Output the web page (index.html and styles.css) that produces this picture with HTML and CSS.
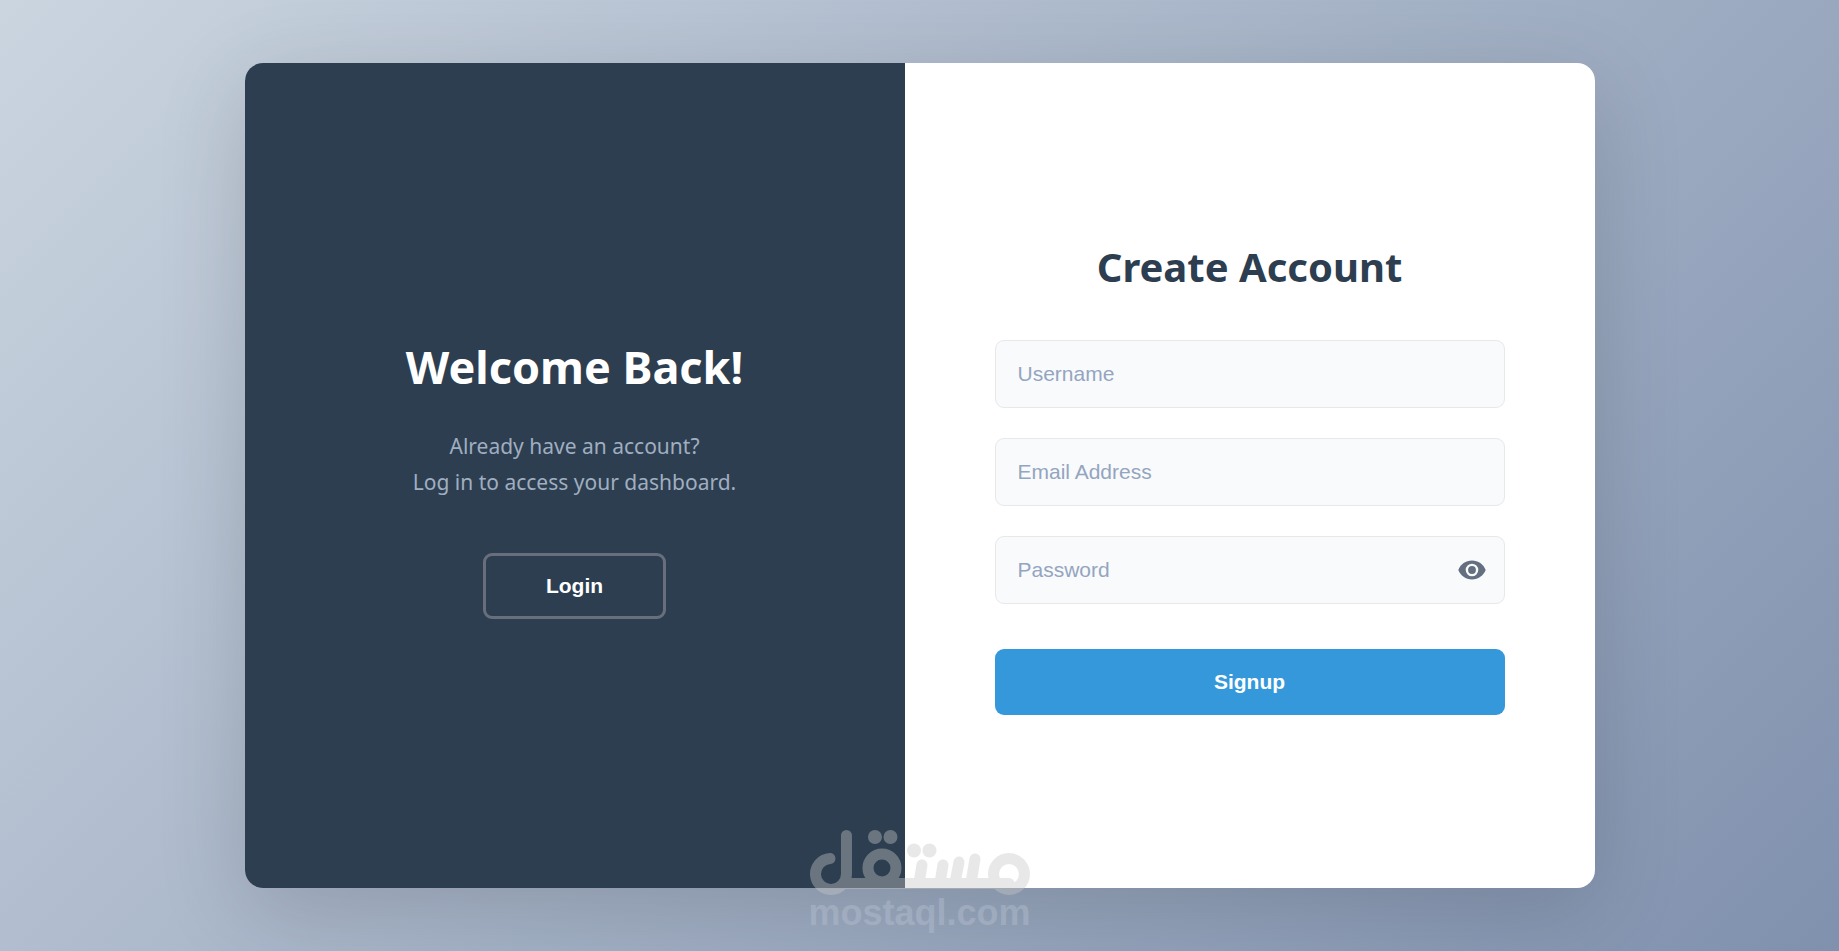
FILE: index.html
```html
<!DOCTYPE html>
<html lang="en">
<head>
<meta charset="utf-8">
<meta name="viewport" content="width=device-width, initial-scale=1">
<title>Create Account</title>
<link rel="stylesheet" href="styles.css">
</head>
<body>
<main class="card">
  <section class="welcome">
    <h1 class="welcome-title">Welcome Back!</h1>
    <p class="welcome-text">Already have an account?<br>Log in to access your dashboard.</p>
    <button class="login-button" type="button">Login</button>
  </section>
  <section class="signup">
    <h2 class="signup-title">Create Account</h2>
    <form class="form">
      <input class="field" type="text" placeholder="Username" aria-label="Username">
      <input class="field" type="email" placeholder="Email Address" aria-label="Email Address">
      <div class="password">
        <input class="field" type="password" placeholder="Password" aria-label="Password">
        <button class="toggle" type="button" aria-label="Show password">
          <svg class="eye" viewBox="0 0 30 30" aria-hidden="true">
            <path fill-rule="evenodd" d="M15 5.600C8.800 5.600 3.500 9.400 1.300 15C3.500 20.600 8.800 24.400 15 24.400S26.500 20.600 28.700 15C26.500 9.400 21.200 5.600 15 5.600ZM15 21.300A6.300 6.300 0 1 1 15 8.700A6.300 6.300 0 0 1 15 21.300Z"/>
            <circle cx="15" cy="15" r="3.900"/>
          </svg>
        </button>
      </div>
      <button class="signup-button" type="submit">Signup</button>
    </form>
  </section>
</main>
<div class="watermark">
  <svg class="watermark-logo" viewBox="0 0 222 66" role="img" aria-label="مستقل">
    <g fill="none" stroke="currentColor" stroke-width="11" stroke-linecap="round" stroke-linejoin="round">
      <path d="M21 29.500A15.500 15.500 0 1 0 37.500 45V6.500M34 54.500H200"/>
      <circle cx="73" cy="39" r="14"/>
      <path d="M113 36L110 54M134 36L131 54M150 33L146 54M166 30L162 54"/>
      <circle cx="200" cy="45" r="15.500"/>
    </g>
    <g fill="currentColor">
      <circle cx="66" cy="8" r="7"/><circle cx="81.500" cy="8" r="7"/>
      <circle cx="105" cy="21.500" r="7"/><circle cx="120.500" cy="21.500" r="7"/>
    </g>
  </svg>
  <span class="watermark-text">mostaql.com</span>
</div>
</body>
</html>
```
FILE: styles.css
```css
* {
  box-sizing: border-box;
}

body {
  margin: 0;
  min-height: 100vh;
  padding: 24px;
  display: flex;
  align-items: center;
  justify-content: center;
  position: relative;
  background: linear-gradient(135deg, #cbd5e0, #8091ae);
  font-family: "Segoe UI", "Noto Sans", sans-serif;
}

.card {
  display: grid;
  grid-template-columns: 22fr 23fr;
  width: 100%;
  max-width: 1350px;
  min-height: 825px;
  border-radius: 18px;
  overflow: hidden;
  background: #fff;
  box-shadow: 0 22px 90px rgba(0, 0, 0, 0.15);
}

.welcome,
.signup {
  display: flex;
  flex-direction: column;
  justify-content: center;
}

.welcome {
  align-items: center;
  padding: 48px;
  background: #2c3e50;
  color: #fff;
  text-align: center;
}

.welcome-title {
  margin: 0 0 27px;
  font-size: 45px;
  line-height: 68px;
}

.welcome-text {
  margin: 0 0 53px;
  color: #a0aec0;
  font-size: 21px;
  line-height: 36px;
}

.login-button,
.signup-button {
  height: 66px;
  border-radius: 9px;
  color: #fff;
  font: bold 21px "Liberation Sans", Arial, sans-serif;
  cursor: pointer;
}

.login-button {
  padding: 0 60px;
  border: 3px solid #696e7c;
  background: transparent;
}

.signup {
  padding: 48px 90px;
}

.signup-title {
  margin: 0 0 43px;
  color: #2c3e50;
  font-size: 40px;
  line-height: 60px;
  text-align: center;
}

.form {
  display: flex;
  flex-direction: column;
  gap: 30px;
}

.field {
  width: 100%;
  height: 68px;
  padding: 0 22px;
  border: 1px solid #e6e8ea;
  border-radius: 9px;
  background: #f9fafc;
  color: #2c3e50;
  font: 21px "Liberation Sans", Arial, sans-serif;
}

.field::placeholder {
  color: #94a5c0;
  opacity: 1;
}

.password {
  position: relative;
  display: flex;
}

.toggle {
  position: absolute;
  top: 0;
  right: 18px;
  height: 100%;
  padding: 0;
  border: 0;
  background: none;
  cursor: pointer;
}

.eye {
  display: block;
  width: 30px;
  height: 30px;
  fill: #646f80;
}

.signup-button {
  margin-top: 15px;
  border: 0;
  background: #3498db;
}

.watermark {
  position: absolute;
  bottom: 20px;
  left: 50%;
  transform: translateX(-50%);
  display: flex;
  flex-direction: column;
  align-items: center;
  color: #c8c8c8;
  opacity: 0.4;
  pointer-events: none;
}

.watermark-logo {
  width: 222px;
  height: 66px;
}

.watermark-text {
  color: #b8c2d2;
  font: bold 36px/36px "Liberation Sans", Arial, sans-serif;
}
```
